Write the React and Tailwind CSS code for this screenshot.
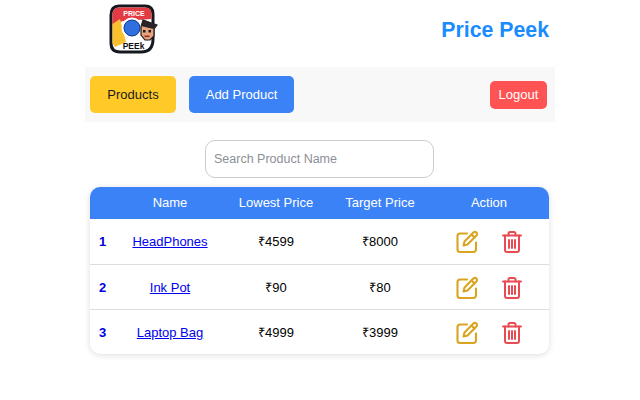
const products = [
  { id: 1, name: "HeadPhones", lowest: "₹4599", target: "₹8000" },
  { id: 2, name: "Ink Pot", lowest: "₹90", target: "₹80" },
  { id: 3, name: "Laptop Bag", lowest: "₹4999", target: "₹3999" },
];

const cols = "grid grid-cols-[33px_94px_118px_90px_124px] items-center text-center";

const Logo = () => (
  <svg width="52" height="56" viewBox="0 0 52 56" aria-hidden="true">
    <path d="M12 3 H38 Q46 3 46 11 V36 Q46 49 34 49 H13 Q4 49 4 40 V12 Q4 3 12 3 Z" fill="#fff" stroke="#15181f" strokeWidth="3" />
    <path d="M12 4.500 H38 Q44.500 4.500 44.500 11 V16 L16 18 L5.500 22 V12 Q5.500 4.500 12 4.500 Z" fill="#e23b44" />
    <path d="M5.500 21 L13 16 L19 39 L8 44 L5.500 40 Z" fill="#fbc02d" />
    <circle cx="25" cy="25" r="10.500" fill="#fff" />
    <circle cx="25" cy="25" r="8" fill="#2f6fe0" stroke="#123a88" strokeWidth="1" />
    <text x="27" y="12.500" textAnchor="middle" fontSize="7" fontWeight="700" fill="#fff" fontFamily="'Liberation Sans', sans-serif">PRICE</text>
    <path d="M34 24 L36 17 L50 22 L47 26 V33 L43 37 H38 L34 32 Z" fill="#e8a27c" stroke="#1b1b1f" strokeWidth="1.200" />
    <path d="M34 23 L36 17 L50 22 L46.500 26 Z" fill="#2a2426" />
    <rect x="36" y="27" width="2.500" height="2.500" fill="#1b1b1f" />
    <rect x="41.500" y="27" width="2.500" height="2.500" fill="#1b1b1f" />
    <rect x="37.500" y="32.500" width="5" height="1.600" fill="#8e2f2b" />
    <text x="26.500" y="46" textAnchor="middle" fontSize="8.500" fontWeight="700" fill="#111" fontFamily="'Liberation Sans', sans-serif">PEEk</text>
  </svg>
);

const EditIcon = () => (
  <svg width="24" height="24" viewBox="0 0 24 24" fill="none" stroke="#d9a520" strokeWidth="2.100" strokeLinecap="round" strokeLinejoin="round" aria-hidden="true">
    <path d="M12 3.500 H5 a2.500 2.500 0 0 0 -2.500 2.500 v13.500 a2.500 2.500 0 0 0 2.500 2.500 h13.500 a2.500 2.500 0 0 0 2.500 -2.500 V12.500" />
    <path d="M18.400 2.600 a2.100 2.100 0 0 1 3 3 L12.500 14.500 L8.500 15.500 L9.500 11.500 Z" />
    <path d="M16.500 4.500 L19.500 7.500" />
  </svg>
);

const TrashIcon = () => (
  <svg width="24" height="24" viewBox="0 0 24 24" fill="none" stroke="#ea4a52" strokeWidth="2" strokeLinecap="round" strokeLinejoin="round" aria-hidden="true">
    <path d="M3 5.500 H21" />
    <path d="M8.500 5.500 V3.500 a1.500 1.500 0 0 1 1.500 -1.500 h4 a1.500 1.500 0 0 1 1.500 1.500 V5.500" />
    <path d="M5 5.500 V20 a2 2 0 0 0 2 2 h10 a2 2 0 0 0 2 -2 V5.500" />
    <path d="M9 10 V18 M12 10 V18 M15 10 V18" />
  </svg>
);

const App = () => (
  <div className="w-[640px] h-[400px] bg-white overflow-hidden font-['Liberation_Sans',Arial,sans-serif]">
    <div className="mx-auto w-[470px]">
      <header className="h-[67px] pt-[3px] pl-[22px] pr-[6px] flex items-start justify-between">
        <Logo />
        <h1 className="mt-[17px] text-[21.3px] font-bold text-[#1a8cff] leading-none">Price Peek</h1>
      </header>
      <nav className="h-[55px] bg-[#f8f8f8] pl-[5px] pr-[8px] flex items-center">
        <button className="w-[86px] h-[37px] pt-[1px] rounded-[5px] bg-[#ffca28] text-[13px] text-[#1a1a1a]">Products</button>
        <button className="ml-[13px] w-[105px] h-[37px] pt-[1px] rounded-[5px] bg-[#3b82f6] text-[13px] text-white">Add Product</button>
        <button className="ml-auto w-[57px] h-[28px] pt-[1px] rounded-[5px] bg-[#ff5252] text-[13px] text-white">Logout</button>
      </nav>
      <div className="mt-[18px] flex justify-center pr-[1px]">
        <input
          placeholder="Search Product Name"
          className="w-[229px] h-[38px] px-[8px] rounded-[10px] border border-[#c9ccd1] text-[12.5px] outline-none placeholder:text-[#8b8f96]"
        />
      </div>
      <div className="mt-[9px] mx-[5px] w-[459px] rounded-[10px] bg-white shadow-[0_1px_6px_rgba(0,0,0,0.14)] overflow-hidden">
        <div className={`${cols} h-[32px] bg-[#3b82f6] text-[13px] text-white`}>
          <span />
          <span>Name</span>
          <span>Lowest Price</span>
          <span>Target Price</span>
          <span className="pl-[4px]">Action</span>
        </div>
        {products.map((p, i) => (
          <div key={p.id} className={`${cols} h-[45px] pt-[1px] text-[13px] text-black ${i > 0 ? "border-t border-[#dddddd]" : ""}`}>
            <span className="pl-[9px] text-left font-bold text-[#0000e0]">{p.id}</span>
            <a href="#" className="text-[#0000ee] underline whitespace-nowrap">{p.name}</a>
            <span>{p.lowest}</span>
            <span>{p.target}</span>
            <span className="pl-[4px] flex items-center justify-center gap-[21px]">
              <EditIcon />
              <TrashIcon />
            </span>
          </div>
        ))}
      </div>
    </div>
  </div>
);

export default App;
